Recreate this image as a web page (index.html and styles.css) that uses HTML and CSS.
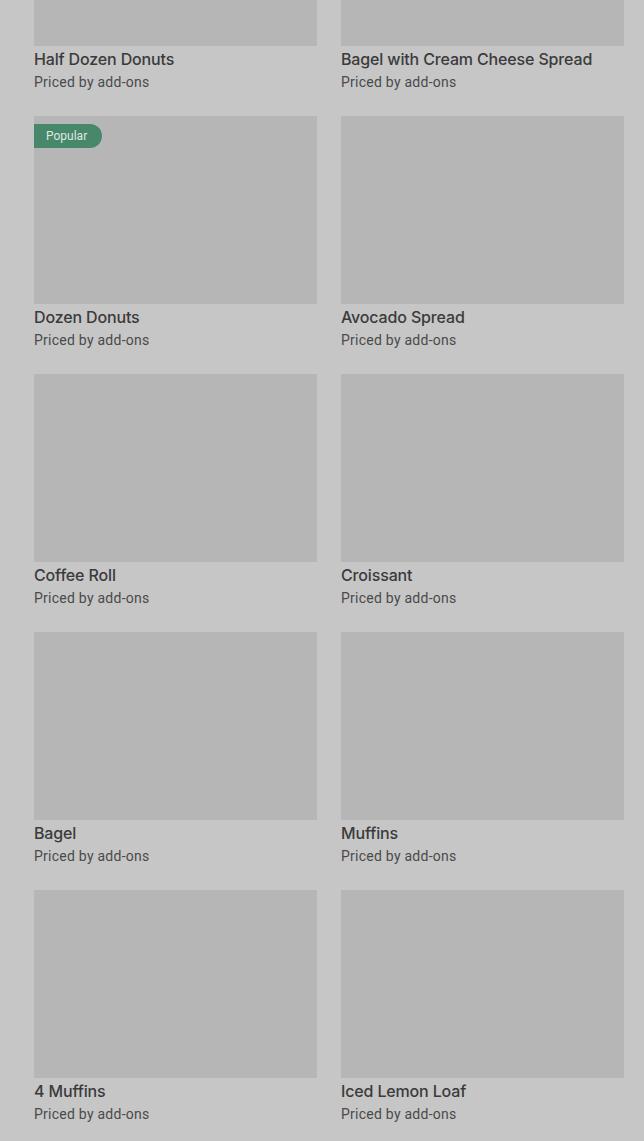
FILE: index.html
```html
<!DOCTYPE html>
<html>
<head>
  <title>Bakery Menu</title>
  <link rel="stylesheet" href="styles.css">
</head>
<body>
  <div class="menu-grid">
    <div class="item">
      <div class="thumb"></div>
      <div class="name">Half Dozen Donuts</div>
      <div class="price">Priced by add-ons</div>
    </div>
    <div class="item">
      <div class="thumb"></div>
      <div class="name">Bagel with Cream Cheese Spread</div>
      <div class="price">Priced by add-ons</div>
    </div>
    <div class="item">
      <div class="thumb"><span class="badge">Popular</span></div>
      <div class="name">Dozen Donuts</div>
      <div class="price">Priced by add-ons</div>
    </div>
    <div class="item">
      <div class="thumb"></div>
      <div class="name">Avocado Spread</div>
      <div class="price">Priced by add-ons</div>
    </div>
    <div class="item">
      <div class="thumb"></div>
      <div class="name">Coffee Roll</div>
      <div class="price">Priced by add-ons</div>
    </div>
    <div class="item">
      <div class="thumb"></div>
      <div class="name">Croissant</div>
      <div class="price">Priced by add-ons</div>
    </div>
    <div class="item">
      <div class="thumb"></div>
      <div class="name">Bagel</div>
      <div class="price">Priced by add-ons</div>
    </div>
    <div class="item">
      <div class="thumb"></div>
      <div class="name">Muffins</div>
      <div class="price">Priced by add-ons</div>
    </div>
    <div class="item">
      <div class="thumb"></div>
      <div class="name">4 Muffins</div>
      <div class="price">Priced by add-ons</div>
    </div>
    <div class="item">
      <div class="thumb"></div>
      <div class="name">Iced Lemon Loaf</div>
      <div class="price">Priced by add-ons</div>
    </div>
  </div>
</body>
</html>
```

FILE: styles.css
```css
body {
  margin: 0;
  padding: 0;
  background-color: #c6c6c6;
  font-family: Roboto, "Liberation Sans", sans-serif;
  overflow: hidden;
}

.menu-grid {
  display: grid;
  grid-template-columns: 283px 283px;
  column-gap: 24px;
  row-gap: 24px;
  padding: 0 20px 0 34px;
  margin-top: -142px;
}

.item {
  display: flex;
  flex-direction: column;
}

.thumb {
  position: relative;
  height: 188px;
  background-color: #b6b6b6;
}

.badge {
  position: absolute;
  top: 8px;
  left: 0;
  height: 24px;
  width: 68px;
  box-sizing: border-box;
  padding-left: 12px;
  line-height: 24px;
  font-size: 12px;
  color: #dfe9e2;
  background-color: #47876a;
  border-radius: 0 12px 12px 0;
}

.name {
  padding-top: 1px;
  line-height: 24px;
  font-family: Inter, Roboto, sans-serif;
  font-size: 16px;
  font-weight: 500;
  letter-spacing: -0.15px;
  color: #3b3b3b;
}

.price {
  padding-top: 1px;
  line-height: 20px;
  font-size: 14px;
  letter-spacing: 0.25px;
  color: #4a4a4a;
}
```
